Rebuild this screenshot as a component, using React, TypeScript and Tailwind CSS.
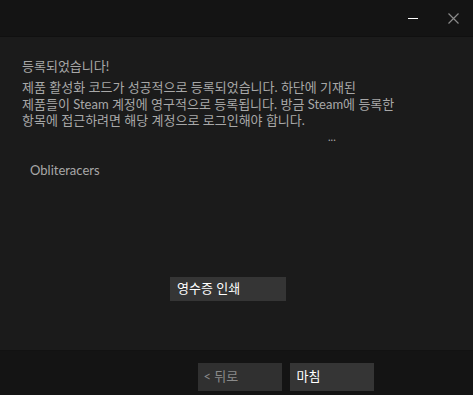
export default function App() {
  const font = { fontFamily: '"Lato", "Noto Sans CJK KR", sans-serif' };
  return (
    <div className="flex h-[395px] w-[473px] flex-col bg-[#1b1b1b] text-[#a8a8a8]" style={font}>
      {/* title bar */}
      <div className="flex h-[37px] shrink-0 items-center justify-end border-b border-[#101010] bg-[#141414]">
        <button className="flex h-[37px] w-[40px] items-center justify-center" aria-label="Minimize">
          <span className="mt-[1px] block h-[1px] w-[10px] bg-white" />
        </button>
        <button className="flex h-[37px] w-[40px] items-center justify-center" aria-label="Close">
          <svg className="h-[11px] w-[11px]" viewBox="0 0 11 11" fill="none" stroke="#8a8a8a" strokeWidth={1.2}>
            <path d="M0.5 0.5L10.5 10.5M10.5 0.5L0.5 10.5" />
          </svg>
        </button>
      </div>

      {/* content */}
      <div className="flex flex-1 flex-col px-[22px] pt-[20px]">
        <div className="text-[13px] leading-[18px]">등록되었습니다!</div>
        <p className="mt-[4px] text-[13px] leading-[16.5px]">
          제품 활성화 코드가 성공적으로 등록되었습니다. 하단에 기재된
          <br />
          제품들이 Steam 계정에 영구적으로 등록됩니다. 방금 Steam에 등록한
          <br />
          항목에 접근하려면 해당 계정으로 로그인해야 합니다.
        </p>
        <div className="ml-[306px] mt-[1px] text-[11px] leading-[14px]">...</div>
        <div className="ml-[8px] mt-[18px] text-[13px] leading-[16px]">Obliteracers</div>
        <div className="mt-[99px] flex">
          <button className="ml-[148px] flex h-[24px] w-[116px] items-center bg-[#353535] px-[7px] text-[13px] text-white">
            영수증 인쇄
          </button>
        </div>
      </div>

      {/* footer */}
      <div className="flex h-[45px] shrink-0 items-start justify-center gap-[8px] border-t border-[#121212] bg-[#141414] pl-[98px] pt-[12px]">
        <button className="flex h-[28px] w-[84px] items-center bg-[#303030] px-[6px] text-[13px] text-[#8a8a8a]">
          &lt; 뒤로
        </button>
        <button className="flex h-[28px] w-[84px] items-center bg-[#353535] px-[7px] text-[13px] text-white">
          마침
        </button>
      </div>
    </div>
  );
}
